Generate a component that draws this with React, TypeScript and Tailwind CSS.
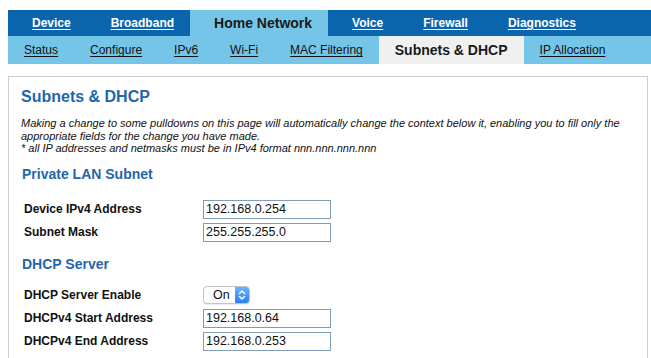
import React from 'react';

const mainTabs = ['Device', 'Broadband', 'Home Network', 'Voice', 'Firewall', 'Diagnostics'];
const subTabs = ['Status', 'Configure', 'IPv6', 'Wi-Fi', 'MAC Filtering', 'Subnets & DHCP', 'IP Allocation'];

function TextBox({ value }: { value: string }) {
  return (
    <div className="w-[128px] h-[19px] border border-[#7f9db9] bg-white pl-[2px] flex items-center text-[12.5px] text-[#111]">
      {value}
    </div>
  );
}

function OnSelect() {
  return (
    <div className="w-[47px] h-[18px] rounded-[4px] border border-[#c4c4c4] bg-white flex overflow-hidden shadow-[0_1px_1px_rgba(0,0,0,0.08)]">
      <div className="flex-1 flex items-center pl-[9px] text-[12.5px] text-[#111]">On</div>
      <div className="w-[14px] h-full bg-gradient-to-b from-[#6cb3fa] to-[#2a7ff0] flex items-center justify-center">
        <svg width="8" height="12" viewBox="0 0 8 12" fill="none">
          <path d="M1.5 4.5 L4 2 L6.5 4.5" stroke="white" strokeWidth="1.4" strokeLinecap="round" strokeLinejoin="round" />
          <path d="M1.5 7.5 L4 10 L6.5 7.5" stroke="white" strokeWidth="1.4" strokeLinecap="round" strokeLinejoin="round" />
        </svg>
      </div>
    </div>
  );
}

function Row({ label, children }: { label: string; children: React.ReactNode }) {
  return (
    <div className="flex items-center h-[23px]">
      <div className="w-[182px] pl-[3px] text-[12px] font-bold text-[#111]">{label}</div>
      {children}
    </div>
  );
}

export default function App() {
  return (
    <div className="w-[651px] h-[358px] overflow-hidden bg-white pt-[10px] pl-[8px] font-['Liberation_Sans',Arial,sans-serif]">
      {/* main navigation */}
      <div className="flex h-[26px] bg-[#0b65ad]">
        {mainTabs.map((t) =>
          t === 'Home Network' ? (
            <div key={t} className="pl-6 pr-4 flex items-center bg-[#75c5e9] text-[14px] font-bold text-[#1a1a1a]">
              {t}
            </div>
          ) : (
            <div key={t} className="pl-6 pr-4 flex items-center text-[12px] font-bold text-white underline underline-offset-[2px]">
              {t}
            </div>
          )
        )}
      </div>
      {/* sub navigation */}
      <div className="flex h-[28px] bg-[#75c5e9]">
        {subTabs.map((t) =>
          t === 'Subnets & DHCP' ? (
            <div key={t} className="px-4 flex items-center bg-[#f0f0f0] text-[14px] font-bold text-[#1a1a1a]">
              {t}
            </div>
          ) : (
            <div key={t} className="px-4 flex items-center text-[12px] text-[#111] underline underline-offset-[2px]">
              {t}
            </div>
          )
        )}
      </div>

      {/* content panel */}
      <div className="mt-[12px] w-[640px] h-[400px] border border-[#cccccc] pt-[11px] pl-[12px]">
        <h1 className="text-[16px] leading-[18px] font-bold text-[#1f66ab]">Subnets &amp; DHCP</h1>
        <p className="mt-[11px] text-[11px] leading-[12.5px] italic text-[#111] whitespace-nowrap">
          Making a change to some pulldowns on this page will automatically change the context below it, enabling you to fill only the
          <br />
          appropriate fields for the change you have made.
          <br />* all IP addresses and netmasks must be in IPv4 format nnn.nnn.nnn.nnn
        </p>

        <h2 className="mt-[10px] text-[14px] leading-[18px] font-bold text-[#1f66ab] pl-[1px]">Private LAN Subnet</h2>
        <div className="mt-[15px]">
          <Row label="Device IPv4 Address">
            <TextBox value="192.168.0.254" />
          </Row>
          <Row label="Subnet Mask">
            <TextBox value="255.255.255.0" />
          </Row>
        </div>

        <h2 className="mt-[11px] text-[14px] leading-[18px] font-bold text-[#1f66ab] pl-[1px]">DHCP Server</h2>
        <div className="mt-[11px]">
          <Row label="DHCP Server Enable">
            <OnSelect />
          </Row>
          <Row label="DHCPv4 Start Address">
            <TextBox value="192.168.0.64" />
          </Row>
          <Row label="DHCPv4 End Address">
            <TextBox value="192.168.0.253" />
          </Row>
          <div className="flex pl-[182px] gap-[18px] text-[12px] font-bold text-[#111] pt-[3px]">
            <span>Reserved</span>
            <span>Usage</span>
            <span>Minimum</span>
            <span>Comment</span>
          </div>
        </div>
      </div>
    </div>
  );
}
